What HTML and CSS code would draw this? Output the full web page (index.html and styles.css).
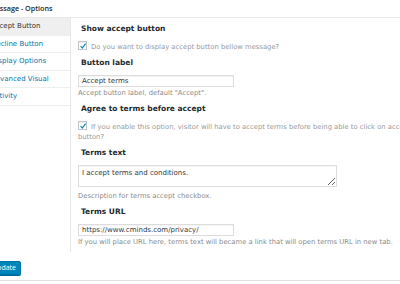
FILE: index.html
```html
<!DOCTYPE html>
<html>
<head>
<meta charset="utf-8">
<link rel="stylesheet" href="styles.css">
</head>
<body>
<div class="page">
  <h1 class="title">Message - Options</h1>
  <div class="tabs-wrap">
    <ul class="tabs">
      <li class="tab active">Accept Button</li>
      <li class="tab">Decline Button</li>
      <li class="tab">Display Options</li>
      <li class="tab">Advanced Visual</li>
      <li class="tab">Activity</li>
    </ul>
    <div class="panel">
      <div class="field">
        <h2 class="label">Show accept button</h2>
        <p class="check-row"><span class="checkbox"><svg viewBox="0 0 8 8" width="8" height="8"><path d="M1.6 4.1 L3.3 5.9 L6.6 1.6" fill="none" stroke="#1e8cbe" stroke-width="1.3"/></svg></span>Do you want to display accept button bellow message?</p>
      </div>
      <div class="field">
        <h2 class="label">Button label</h2>
        <div class="input">Accept terms</div>
        <p class="desc">Accept button label, default "Accept".</p>
      </div>
      <div class="field">
        <h2 class="label">Agree to terms before accept</h2>
        <p class="check-row"><span class="checkbox"><svg viewBox="0 0 8 8" width="8" height="8"><path d="M1.6 4.1 L3.3 5.9 L6.6 1.6" fill="none" stroke="#1e8cbe" stroke-width="1.3"/></svg></span>If you enable this option, visitor will have to accept terms before being able to click on accept<br>button?</p>
      </div>
      <div class="field">
        <h2 class="label">Terms text</h2>
        <textarea class="textarea">I accept terms and conditions.</textarea>
        <p class="desc desc-after-area">Description for terms accept checkbox.</p>
      </div>
      <div class="field last">
        <h2 class="label">Terms URL</h2>
        <div class="input">https://www.cminds.com/privacy/</div>
        <p class="desc">If you will place URL here, terms text will became a link that will open terms URL in new tab.</p>
      </div>
    </div>
  </div>
  <div class="actions">
    <button class="btn">Update</button>
  </div>
  <div class="footer"></div>
</div>
</body>
</html>
```

FILE: styles.css
```css
html, body {
  margin: 0;
  padding: 0;
  background: #fff;
  width: 400px;
  height: 284px;
  overflow: hidden;
}
.page {
  margin-left: -20px;
  width: 760px;
  font-family: "DejaVu Sans", Verdana, sans-serif;
  font-size: 6.8px;
  color: #444;
}
.title {
  margin: 0;
  height: 17px;
  line-height: 16px;
  padding-left: 9px;
  font-family: "Open Sans", sans-serif;
  font-weight: 600;
  font-size: 7.2px;
  color: #23282d;
}
.tabs-wrap {
  display: flex;
  border-top: 1px solid #e8e8e8;
}
.tabs {
  list-style: none;
  margin: 0;
  padding: 0;
  width: 90px;
  flex: none;
}
.tab {
  height: 16.5px;
  line-height: 16.5px;
  padding-left: 11px;
  border-bottom: 1px solid #efefef;
  color: #0073aa;
  font-size: 7px;
  white-space: nowrap;
}
.tab.active {
  background: #efefef;
  color: #333;
}
.panel {
  flex: 1;
  border-left: 1px solid #e8e8e8;
  padding: 6px 0 5px 7px;
}
.field {
  margin-bottom: 6px;
}
.field.last {
  margin-bottom: 0;
}
.label {
  margin: 0 0 7px;
  padding-left: 3px;
  font-size: 7.5px;
  line-height: 10px;
  font-weight: bold;
  color: #23282d;
}
.check-row {
  margin: 0;
  line-height: 10px;
  color: #999;
  white-space: nowrap;
}
.checkbox {
  display: inline-block;
  width: 7px;
  height: 7px;
  border: 1px solid #c2c6ca;
  background: #fff;
  box-shadow: inset 0 1px 1px rgba(0,0,0,0.08);
  vertical-align: -1px;
  margin-right: 4px;
  position: relative;
}
.checkbox svg {
  position: absolute;
  left: -0.5px;
  top: -0.5px;
}
.input {
  box-sizing: border-box;
  width: 156px;
  height: 12px;
  border: 1px solid #ddd;
  box-shadow: inset 0 1px 1px rgba(0,0,0,0.05);
  padding-left: 3px;
  line-height: 10px;
  font-size: 7px;
  color: #32373c;
  white-space: nowrap;
}
.textarea {
  display: block;
  box-sizing: border-box;
  width: 259px;
  height: 22px;
  margin: 0;
  border: 1px solid #ddd;
  box-shadow: inset 0 1px 1px rgba(0,0,0,0.05);
  padding: 2px 3px;
  font-family: "DejaVu Sans", Verdana, sans-serif;
  font-size: 7px;
  line-height: 10px;
  color: #32373c;
  resize: vertical;
  overflow: hidden;
}
.desc {
  margin: 1px 0 0;
  line-height: 10px;
  color: #8a8a8a;
  white-space: nowrap;
}
.desc-after-area {
  margin-top: 4px;
}
.actions {
  padding: 9px 0 0 6px;
  height: 14px;
}
.btn {
  box-sizing: border-box;
  height: 14px;
  width: 35px;
  padding: 0 5px;
  border: 1px solid #0073aa;
  border-radius: 2px;
  background: #0085ba;
  color: #fff;
  font-family: "Open Sans", sans-serif;
  font-size: 7px;
  line-height: 12px;
  box-shadow: 0 1px 0 #006799;
}
.footer {
  margin-top: 5px;
  border-top: 1px solid #e1e1e1;
  height: 4px;
}
```
